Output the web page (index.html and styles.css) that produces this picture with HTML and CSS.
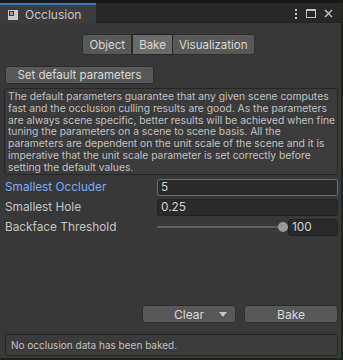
FILE: index.html
```html
<!DOCTYPE html>
<html lang="en">
<head>
  <meta charset="UTF-8" />
  <title>Occlusion</title>
  <link rel="stylesheet" href="styles.css">
</head>
<body>
  <div class="window">
    <div class="tabbar">
      <div class="tab">
        <svg class="tab-icon" width="12" height="12" viewBox="0 0 12 12">
          <rect x="1" y="1" width="10" height="10" fill="#c8c8c8" />
          <rect x="2" y="2" width="5" height="5" fill="#3c3c3c" />
          <rect x="3" y="3" width="3" height="3" fill="#9a9a9a" />
        </svg>
        <span>Occlusion</span>
      </div>
      <div class="tab-actions">
        <svg width="4" height="10" viewBox="0 0 4 10">
          <rect x="1" y="0" width="2" height="2" fill="#c4c4c4" />
          <rect x="1" y="4" width="2" height="2" fill="#c4c4c4" />
          <rect x="1" y="8" width="2" height="2" fill="#c4c4c4" />
        </svg>
        <svg width="10" height="9" viewBox="0 0 10 9">
          <rect x="0.5" y="0.5" width="9" height="8" fill="none" stroke="#c4c4c4" />
          <rect x="0" y="0" width="10" height="2" fill="#c4c4c4" />
        </svg>
        <svg width="9" height="9" viewBox="0 0 9 9">
          <path d="M1 1 L8 8 M8 1 L1 8" stroke="#c4c4c4" stroke-width="1.4" />
        </svg>
      </div>
    </div>

    <div class="content">
      <div class="toolbar">
        <button class="seg">Object</button>
        <button class="seg active">Bake</button>
        <button class="seg">Visualization</button>
      </div>

      <button class="btn defaults">Set default parameters</button>

      <div class="helpbox">
        The default parameters guarantee that any given scene computes<br>
        fast and the occlusion culling results are good. As the parameters<br>
        are always scene specific, better results will be achieved when fine<br>
        tuning the parameters on a scene to scene basis. All the<br>
        parameters are dependent on the unit scale of the scene and it is<br>
        imperative that the unit scale parameter is set correctly before<br>
        setting the default values.
      </div>

      <div class="fields">
        <div class="row">
          <label class="focused">Smallest Occluder</label>
          <div class="field focus">5</div>
        </div>
        <div class="row">
          <label>Smallest Hole</label>
          <div class="field">0.25</div>
        </div>
        <div class="row">
          <label>Backface Threshold</label>
          <div class="slider">
            <div class="track"><div class="knob"></div></div>
            <div class="field small">100</div>
          </div>
        </div>
      </div>

      <div class="spacer"></div>

      <div class="actions">
        <button class="btn action">Clear<span class="caret"></span></button>
        <button class="btn action">Bake</button>
      </div>

      <div class="status">No occlusion data has been baked.</div>
    </div>
  </div>
</body>
</html>
```

FILE: styles.css
```css
:root {
  --bg: #383838;
  --tabbar: #282828;
  --fg: #c4c4c4;
  --blue: #3a79bb;
  --btn: #585858;
  --btn-active: #6a6a6a;
  --btn-border: #2e2e2e;
  --field: #2a2a2a;
  --field-border: #212121;
}

html, body {
  margin: 0;
  padding: 0;
}

body {
  background-color: #1c261f;
  font-family: 'Inter', 'Noto Sans', sans-serif;
  color: var(--fg);
  width: 343px;
  height: 360px;
  overflow: hidden;
  border-top: 3px solid #191919;
  box-sizing: border-box;
}

.window {
  width: 341px;
  height: 355px;
  background-color: var(--bg);
  display: flex;
  flex-direction: column;
}

.tabbar {
  height: 19px;
  display: flex;
  background-color: var(--tabbar);
  border-bottom: 1px solid #232323;
}

.tab {
  width: 96px;
  box-sizing: border-box;
  background-color: #3c3c3c;
  border-top: 2px solid var(--blue);
  margin-bottom: -1px;
  display: flex;
  align-items: center;
  gap: 6px;
  padding-left: 7px;
  font-size: 12px;
}

.tab-icon {
  margin-top: 1px;
}

.tab-actions {
  margin-left: auto;
  display: flex;
  align-items: center;
  gap: 8px;
  padding: 2px 8px 0 0;
}

.content {
  flex: 1;
  display: flex;
  flex-direction: column;
  padding: 0 3px 0 4px;
}

button {
  font-family: inherit;
  color: #d8d8d8;
  font-size: 11.5px;
  cursor: pointer;
}

.toolbar {
  display: flex;
  justify-content: center;
  margin-top: 11px;
  padding-right: 5px;
}

.seg {
  height: 21px;
  padding: 0 6px;
  background-color: var(--btn);
  border: 1px solid var(--btn-border);
  border-left: none;
}

.seg:first-child {
  border-left: 1px solid var(--btn-border);
  border-radius: 3px 0 0 3px;
}

.seg:last-child {
  border-radius: 0 3px 3px 0;
}

.seg.active {
  background-color: var(--btn-active);
  border-color: #262626;
  border-left: 1px solid #262626;
}

.btn {
  background-color: var(--btn);
  border: 1px solid var(--btn-border);
  border-radius: 3px;
  padding: 0;
}

.defaults {
  align-self: flex-start;
  margin: 11px 0 0 1px;
  width: 149px;
  height: 18px;
}

.helpbox {
  margin-top: 4px;
  background-color: #3b3b3b;
  border: 1px solid #262626;
  border-radius: 3px;
  padding: 2px 4px 0 3px;
  font-size: 10.3px;
  line-height: 11.8px;
  white-space: nowrap;
  color: #c0c0c0;
}

.fields {
  margin-top: 4px;
  display: flex;
  flex-direction: column;
  gap: 3px;
}

.row {
  display: flex;
  align-items: center;
  height: 17px;
}

.row label {
  width: 152px;
  padding-left: 1px;
  font-size: 11.8px;
}

.row label.focused {
  color: #7babf8;
}

.field {
  flex: 1;
  height: 17px;
  box-sizing: border-box;
  background-color: var(--field);
  border: 1px solid var(--field-border);
  border-radius: 3px;
  padding-left: 3px;
  font-size: 11.8px;
  line-height: 15px;
  color: #d2d2d2;
}

.field.focus {
  border-color: var(--blue);
}

.slider {
  flex: 1;
  display: flex;
  align-items: center;
  gap: 6px;
}

.track {
  position: relative;
  flex: 1;
  height: 2px;
  background-color: #5e5e5e;
  margin-right: -1px;
}

.knob {
  position: absolute;
  right: -5px;
  top: -4px;
  width: 10px;
  height: 10px;
  border-radius: 50%;
  background-color: #999999;
}

.field.small {
  flex: 0 0 50px;
}

.spacer {
  flex: 1;
}

.actions {
  display: flex;
  justify-content: flex-end;
  gap: 8px;
}

.action {
  width: 94px;
  height: 18px;
  position: relative;
  font-size: 12px;
}

.caret {
  position: absolute;
  right: 8px;
  top: 6px;
  border-left: 4px solid transparent;
  border-right: 4px solid transparent;
  border-top: 5px solid #c4c4c4;
}

.status {
  margin: 11px 0 2px 1px;
  height: 22px;
  box-sizing: border-box;
  background-color: #3b3b3b;
  border: 1px solid #262626;
  border-radius: 3px;
  padding-left: 5px;
  font-size: 10px;
  line-height: 20px;
  color: #c0c0c0;
}
```
